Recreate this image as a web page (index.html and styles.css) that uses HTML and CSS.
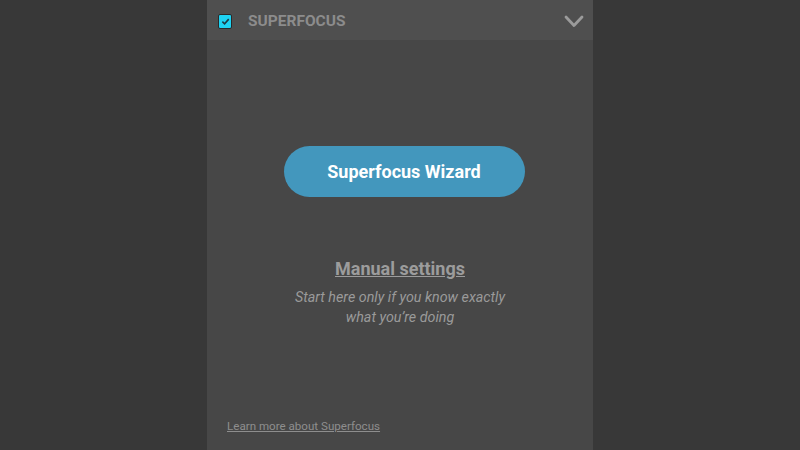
FILE: index.html
```html
<!DOCTYPE html>
<html lang="en">
<head>
    <meta charset="UTF-8">
    <meta name="viewport" content="width=device-width, initial-scale=1.0">
    <title>Superfocus</title>
    <link rel="stylesheet" href="styles.css">
</head>
<body>
    <div class="panel">
        <div class="header">
            <span class="check">
                <svg width="9" height="9" viewBox="0 0 10 10"><path d="M1.5 5.2 L4 7.6 L8.6 2.4" fill="none" stroke="#1e3a44" stroke-width="1.8"/></svg>
            </span>
            <span class="title">SUPERFOCUS</span>
            <svg class="chevron" width="20" height="13" viewBox="0 0 20 13"><path d="M2 2 L10 10.5 L18 2" fill="none" stroke="#9b9b9b" stroke-width="2.8" stroke-linecap="round" stroke-linejoin="round"/></svg>
        </div>

        <div class="content">
            <button class="wizard">Superfocus Wizard</button>

            <div class="manual">
                <a class="manual-link">Manual settings</a>
                <p class="hint">Start here only if you know exactly<br>what you’re doing</p>
            </div>
        </div>

        <div class="footer">
            <a class="learn">Learn more about Superfocus</a>
        </div>
    </div>
</body>
</html>
```

FILE: styles.css
```css
body {
    margin: 0;
    background-color: #383838;
    font-family: Roboto, "Noto Sans", sans-serif;
    height: 450px;
    overflow: hidden;
}
.panel {
    width: 386px;
    height: 450px;
    margin-left: 207px;
    background-color: #474747;
    display: flex;
    flex-direction: column;
}
.header {
    height: 40px;
    box-sizing: border-box;
    background-color: #4f4f4f;
    display: flex;
    align-items: center;
    padding: 2px 9px 0 11px;
}
.check {
    width: 12px;
    height: 13px;
    background-color: #1ed2f2;
    border: 1px solid #2a2a2a;
    border-radius: 2px;
    display: flex;
    align-items: center;
    justify-content: center;
}
.title {
    margin-left: 16px;
    color: #8c8c8c;
    font-weight: 700;
    font-size: 15.5px;
    flex: 1;
}
.chevron {
    margin-top: 1px;
}
.content {
    flex: 1;
    display: flex;
    flex-direction: column;
    align-items: center;
}
.wizard {
    margin-top: 106px;
    margin-left: 8px;
    width: 241px;
    height: 51px;
    border: none;
    border-radius: 26px;
    background-color: #4397bd;
    color: #ffffff;
    font-family: Roboto, sans-serif;
    font-weight: 700;
    font-size: 18px;
}
.manual {
    margin-top: 61px;
    text-align: center;
}
.manual-link {
    color: #9c9c9c;
    font-weight: 700;
    font-size: 18px;
    text-decoration: underline;
}
.hint {
    margin: 8px 0 0;
    color: #9a9a9a;
    font-style: italic;
    font-size: 14.3px;
    line-height: 20px;
}
.footer {
    padding: 0 0 16px 20px;
}
.learn {
    color: #8e8e8e;
    font-size: 11.6px;
    text-decoration: underline;
}
```
